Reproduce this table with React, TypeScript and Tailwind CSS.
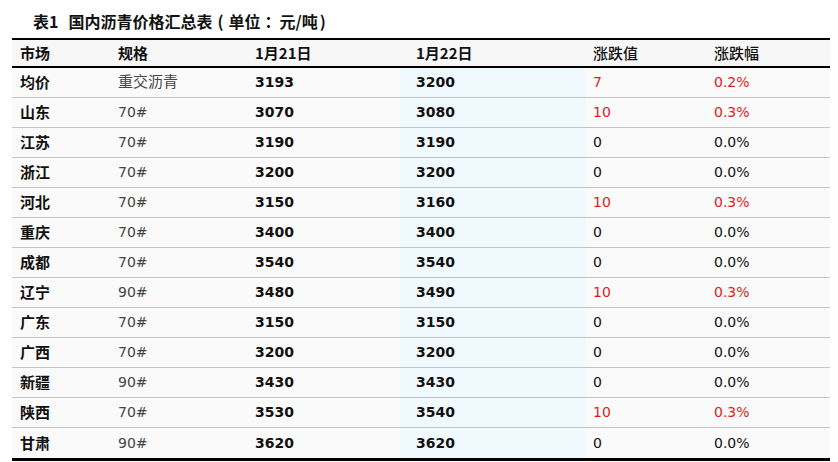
import React from 'react';

interface Row {
  market: string;
  spec: string;
  d21: string;
  d22: string;
  change: string;
  pct: string;
}

const rows: Row[] = [
  { market: '均价', spec: '重交沥青', d21: '3193', d22: '3200', change: '7', pct: '0.2%' },
  { market: '山东', spec: '70#', d21: '3070', d22: '3080', change: '10', pct: '0.3%' },
  { market: '江苏', spec: '70#', d21: '3190', d22: '3190', change: '0', pct: '0.0%' },
  { market: '浙江', spec: '70#', d21: '3200', d22: '3200', change: '0', pct: '0.0%' },
  { market: '河北', spec: '70#', d21: '3150', d22: '3160', change: '10', pct: '0.3%' },
  { market: '重庆', spec: '70#', d21: '3400', d22: '3400', change: '0', pct: '0.0%' },
  { market: '成都', spec: '70#', d21: '3540', d22: '3540', change: '0', pct: '0.0%' },
  { market: '辽宁', spec: '90#', d21: '3480', d22: '3490', change: '10', pct: '0.3%' },
  { market: '广东', spec: '70#', d21: '3150', d22: '3150', change: '0', pct: '0.0%' },
  { market: '广西', spec: '70#', d21: '3200', d22: '3200', change: '0', pct: '0.0%' },
  { market: '新疆', spec: '90#', d21: '3430', d22: '3430', change: '0', pct: '0.0%' },
  { market: '陕西', spec: '70#', d21: '3530', d22: '3540', change: '10', pct: '0.3%' },
  { market: '甘肃', spec: '90#', d21: '3620', d22: '3620', change: '0', pct: '0.0%' },
];

const cols = 'grid grid-cols-[98px_137px_153px_185px_121px_124px]';

export default function App() {
  return (
    <div className="w-[838px] h-[462px] bg-white text-[#111] font-['DejaVu_Sans','Noto_Sans_CJK_SC',sans-serif] text-[14px] overflow-hidden">
      {/* Title */}
      <div className="h-[38px] pl-[33px] pt-[10px] font-bold text-[16px] leading-[22px] font-['Noto_Sans_CJK_SC',sans-serif] whitespace-nowrap">
        表1
        <span className="ml-[10px]">国内沥青价格汇总表</span>
        <span className="ml-[5px]">(</span>
        <span className="ml-[5px]">单位</span>
        <span className="inline-block w-[19px] pl-[4px] overflow-visible">：</span>
        <span>元/吨</span>
        <span className="ml-[2px]">)</span>
      </div>

      <div className="ml-[12px] w-[818px] border-t-2 border-b-[3px] border-black">
        {/* Header */}
        <div className={cn(cols, 'h-[28px] items-center bg-[#f7f7f7] border-b-2 border-black font-bold font-[\'Noto_Sans_CJK_SC\',sans-serif] text-[15px]')}>
          <div className="pl-[8px]">市场</div>
          <div className="pl-[8px]">规格</div>
          <div className="pl-[8px]">1月21日</div>
          <div className="pl-[16px]">1月22日</div>
          <div className="pl-[8px] font-medium">涨跌值</div>
          <div className="pl-[8px] font-medium">涨跌幅</div>
        </div>

        {rows.map((r, i) => (
          <div
            key={i}
            className={cn(cols, 'h-[30px] bg-[#fafafa]', i < rows.length - 1 && 'border-b border-[#c4c4c4]')}
          >
            <div className="pl-[8px] flex items-center font-bold text-[15px] font-['Noto_Sans_CJK_SC',sans-serif]">{r.market}</div>
            <div className="pl-[8px] flex items-center text-[#444]">
              {/[0-9]/.test(r.spec) ? r.spec : <span className="text-[15px]">{r.spec}</span>}
            </div>
            <div className="pl-[8px] flex items-center font-bold">{r.d21}</div>
            <div className="pl-[16px] flex items-center font-bold bg-[#f0f9fd]">{r.d22}</div>
            <div className={cn('pl-[8px] flex items-center', r.change !== '0' ? 'text-[#e21b1b]' : 'text-[#111]')}>{r.change}</div>
            <div className={cn('pl-[8px] flex items-center', r.change !== '0' ? 'text-[#e21b1b]' : 'text-[#111]')}>{r.pct}</div>
          </div>
        ))}
      </div>
    </div>
  );
}

function cn(...parts: (string | false | undefined)[]) {
  return parts.filter(Boolean).join(' ');
}
